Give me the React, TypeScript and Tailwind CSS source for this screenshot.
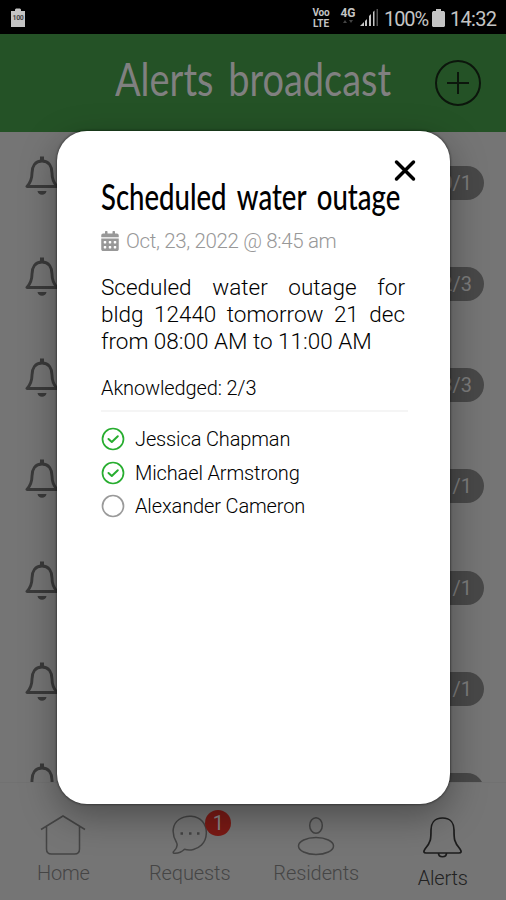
import React from 'react';
import { FaCalendarAlt } from 'react-icons/fa';

const alerts = [
    { id: 1, count: '0/1' },
    { id: 2, count: '2/3' },
    { id: 3, count: '3/3' },
    { id: 4, count: '1/1' },
    { id: 5, count: '1/1' },
    { id: 6, count: '1/1' },
    { id: 7, count: '' },
];

const residents = [
    { name: 'Jessica Chapman', acknowledged: true },
    { name: 'Michael Armstrong', acknowledged: true },
    { name: 'Alexander Cameron', acknowledged: false },
];

function StatusBar() {
    return (
        <div className="h-[34px] shrink-0 bg-black flex items-center justify-between pl-[11px] pr-[9px] text-[#c4c4c4]">
            <div className="relative mt-[1px] w-[14px] h-[19px]">
                <svg className="absolute inset-0" width="14" height="19" viewBox="0 0 14 19" fill="#c4c4c4">
                    <path d="M0 3h4V1.5L5 .5h4l1 1V3h4v16H0z" />
                </svg>
                <span className="absolute inset-x-0 top-[6px] text-center text-[7px] leading-[9px] font-bold tracking-tighter text-[#444]">100</span>
            </div>
            <div className="flex items-center">
                <div className="mt-[2px] w-[18px] flex flex-col items-center text-[10px] leading-[11px] font-bold">
                    <span className="tracking-[-0.2px]">Voo</span>
                    <span>LTE</span>
                </div>
                <div className="ml-[10px] w-[16px] h-[18px] flex flex-col items-center">
                    <span className="text-[12px] leading-[11px] font-bold">4G</span>
                    <svg width="10" height="5" viewBox="0 0 10 5" fill="#444">
                        <path d="M0 4l2-3 2 3zM6 1h4L8 4z" />
                    </svg>
                </div>
                <svg className="ml-[4px]" width="18" height="18" viewBox="0 0 18 18" fill="#c4c4c4">
                    <path d="M0 18l4-4v4zM5 13l2-2v7H5zM9 8l2-2v12H9zM13 4l1.500-1.500V18H13z" />
                    <path d="M16.500 1H18v17h-1.500z" fill="#555" />
                </svg>
                <span className="ml-[6px] mt-[3px] w-[44px] text-[20px] leading-[24px] whitespace-nowrap tracking-[-1.1px]">100%</span>
                <svg className="ml-[4px] mt-[2px]" width="13" height="18" viewBox="0 0 13 18" fill="#c4c4c4">
                    <path d="M0 3.500L1 2h3V0h5v2h3l1 1.500V17l-1 1H1l-1-1z" />
                </svg>
                <span className="ml-[5px] mt-[3px] w-[47px] text-[20px] leading-[24px] whitespace-nowrap tracking-[-0.7px]">14:32</span>
            </div>
        </div>
    );
}

function ListBell() {
    return (
        <svg width="34" height="40" viewBox="0 0 34 40" fill="none" stroke="#3a3a3a" strokeWidth="2.900" strokeLinejoin="round">
            <path d="M17 5C10 5 7 10.500 7 17c0 6-1 9-5 13.500h30C28 26 27 23 27 17c0-6.500-3-12-10-12z" />
            <path d="M17 .5v4" strokeWidth="4" />
            <path d="M12.500 35h9c-.5 2.500-2.200 3.800-4.500 3.800S13 37.500 12.500 35z" fill="#3a3a3a" stroke="none" />
        </svg>
    );
}

function AlertRow({ count }: { count: string }) {
    return (
        <div className="h-[101.3px] shrink-0 flex items-start justify-between pl-[25px] pr-[22px] pt-[23.500px]">
            <ListBell />
            <div className="mt-[10px] w-[62px] h-[34px] rounded-full bg-[#484848] flex items-center justify-end pr-[12px] text-[20px] text-[#7c7c7c]">
                {count}
            </div>
        </div>
    );
}

function TabBar() {
    return (
        <nav className="h-[118px] shrink-0 border-t border-[#717171] grid grid-cols-4 text-[20px] leading-[24px] font-light text-[#454545]">
            <div className="flex flex-col items-center pt-[32px]">
                <svg width="46" height="40" viewBox="0 0 46 40" fill="none" stroke="#444" strokeWidth="1.500">
                    <path d="M1 14.500L23 1l22 13.500M6.500 11.500V34q0 5 5 5h23q5 0 5-5V11.500" />
                </svg>
                <span className="mt-[6px] tracking-[-0.2px]">Home</span>
            </div>
            <div className="flex flex-col items-center pt-[32px]">
                <div className="relative">
                    <svg width="36" height="40" viewBox="0 0 36 40" fill="none" stroke="#444" strokeWidth="1.500" strokeLinejoin="round">
                        <path d="M4.500 27.500C-1 18 .5 9 7 4.500C14-.5 25 0 30.500 6.500C36 13 35.500 24 29.500 30C25 34.500 18 36 12.500 34.300C9 37.800 5.500 38.600 2 38.300C.8 37.800 1 36.800 2.300 35.700C5 33 6 30.500 4.500 27.500z" />
                        <path d="M8.500 18.500H11M17 18.500h2.500M25 18.500h2.500" strokeWidth="2.500" />
                    </svg>
                    <span className="absolute left-[33.500px] top-[-5px] w-[26px] h-[26px] rounded-full bg-[#7b1a15] text-center text-[20px] leading-[26px] font-normal text-[#888]">
                        1
                    </span>
                </div>
                <span className="mt-[6px] tracking-[-0.1px]">Requests</span>
            </div>
            <div className="flex flex-col items-center pt-[34px]">
                <svg width="38" height="39" viewBox="0 0 38 39" fill="none" stroke="#444" strokeWidth="1.500">
                    <ellipse cx="19" cy="8.500" rx="6.300" ry="7.700" />
                    <ellipse cx="19" cy="29" rx="17.500" ry="8.500" />
                </svg>
                <span className="mt-[5px] tracking-[-0.1px]">Residents</span>
            </div>
            <div className="flex flex-col items-center pt-[33px] text-[#222]">
                <svg width="41" height="43" viewBox="0 0 41 43" fill="none" stroke="#1c1c1c" strokeWidth="1.700">
                    <path d="M20.500 2C12 2 9 8 9 14c0 9 0 12-6 19-2 3-1 4 1 4h33c2 0 3-1 1-4-6-7-6-10-6-19 0-6-3-12-11.500-12z" />
                    <path d="M16.500 37c0 5 8 5 8 0" />
                </svg>
                <span className="mt-[7px] tracking-[-0.2px]">Alerts</span>
            </div>
        </nav>
    );
}

function AlertModal() {
    return (
        <div className="absolute left-[57px] top-[131px] w-[393px] h-[673px] rounded-[30px] bg-white pt-[28px] pl-[44px] pr-[34px] shadow-[0_12px_36px_rgba(0,0,0,0.35),0_0_2px_1px_rgba(0,0,0,0.35)]">
            <div className="flex justify-end h-[23px]">
                <svg width="22" height="23" viewBox="0 0 22 23" stroke="#000" strokeWidth="3.500" strokeLinecap="round">
                    <path d="M2.500 3l17 17M19.500 3l-17 17" />
                </svg>
            </div>
            <h2 className="h-[42px] -mt-[7px] w-[310px] origin-left scale-x-[0.765] whitespace-nowrap font-['Lato'] text-[36px] leading-[42px] font-medium [word-spacing:5px] text-black">
                Scheduled water outage
            </h2>
            <div className="mt-[11px] flex items-center text-[#989898]">
                <FaCalendarAlt className="w-[18px] h-[20px]" />
                <span className="ml-[7px] text-[20.500px] leading-[26px] tracking-[-0.350px] font-light">Oct, 23, 2022 @ 8:45 am</span>
            </div>
            <p className="mt-[20px] w-[304px] text-justify text-[22.500px] leading-[27px] text-black font-light">
                Sceduled water outage for bldg 12440 tomorrow 21 dec from 08:00 AM to 11:00 AM
            </p>
            <div className="mt-[20px] w-[307px] h-[37px] border-b-2 border-[#f5f5f5] text-[20px] leading-[26px] tracking-[-0.120px] text-black font-light">
                Aknowledged: 2/3
            </div>
            <ul className="mt-[10px]">
                {residents.map((resident) => (
                    <li key={resident.name} className="flex items-center h-[33.800px] text-[20px] font-light tracking-[-0.130px] text-black">
                        <svg width="24" height="24" viewBox="0 0 24 24" fill="none" strokeLinecap="round" strokeLinejoin="round">
                            <circle cx="12" cy="12" r="10.500" stroke={resident.acknowledged ? '#27ad2f' : '#9a9a9a'} strokeWidth="1.700" />
                            {resident.acknowledged && <path d="M7.500 12l3.300 3 6-5.800" stroke="#27ad2f" strokeWidth="2" />}
                        </svg>
                        <span className="ml-[10px]">{resident.name}</span>
                    </li>
                ))}
            </ul>
        </div>
    );
}

export default function App() {
    return (
        <div className="relative w-[506px] h-[900px] overflow-hidden flex flex-col bg-[#757575] font-['Roboto',sans-serif]">
            <StatusBar />

            {/* Header */}
            <header className="h-[98px] shrink-0 bg-[#245226] flex items-center justify-between pl-[115px] pr-[25px]">
                <h1 className="mt-[-9px] w-[277px] origin-left scale-x-[0.825] whitespace-nowrap font-['Lato'] text-[46px] leading-[52px] [word-spacing:6px] text-[#808080]">
                    Alerts broadcast
                </h1>
                <svg width="46" height="46" viewBox="0 0 46 46" fill="none" stroke="#0c160c" strokeWidth="2">
                    <circle cx="23" cy="23" r="22" />
                    <path d="M12 23h22M23 12v22" />
                </svg>
            </header>

            {/* List */}
            <main className="h-[650px] shrink-0 overflow-hidden flex flex-col">
                {alerts.map((alert) => (
                    <AlertRow key={alert.id} count={alert.count} />
                ))}
            </main>

            <TabBar />
            <AlertModal />
        </div>
    );
}
